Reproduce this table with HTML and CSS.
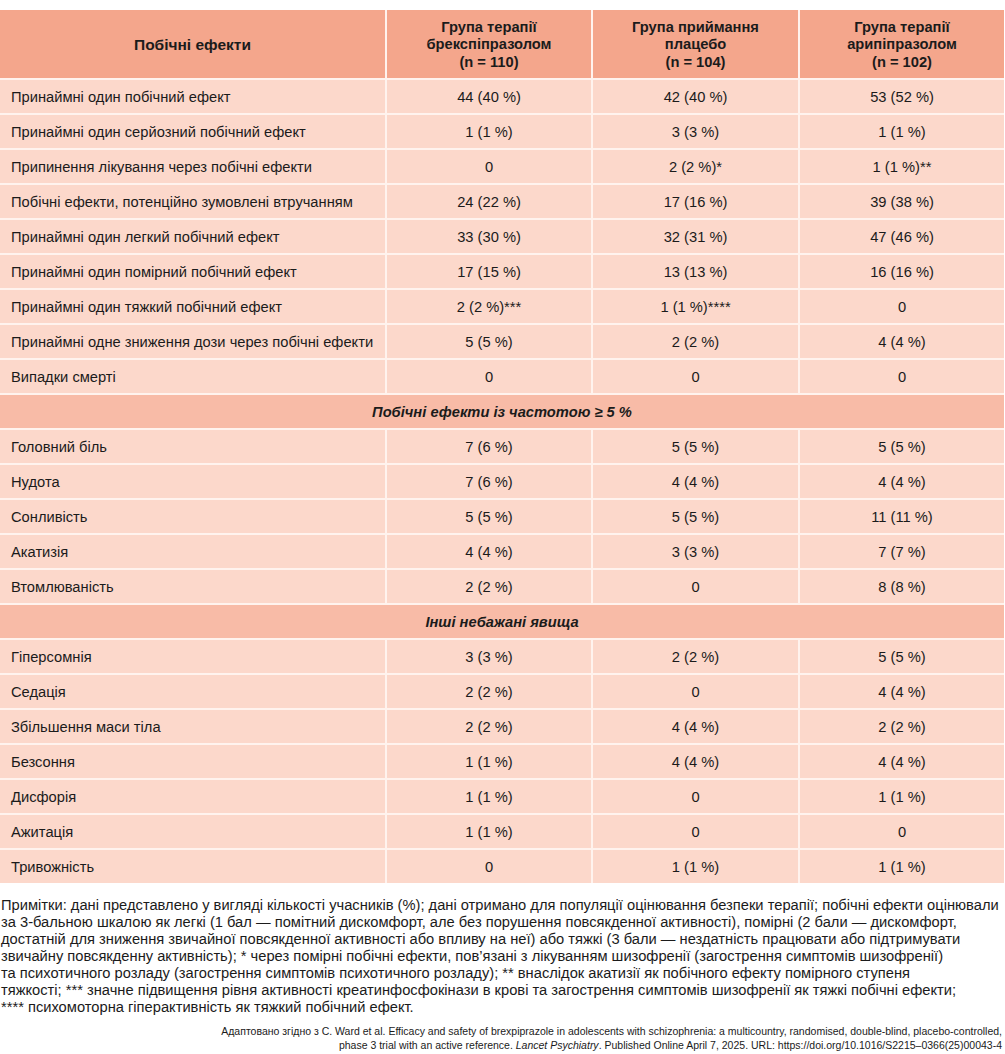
FILE: index.html
```html
<!DOCTYPE html>
<html lang="uk">
<head>
<meta charset="utf-8">
<link rel="stylesheet" href="styles.css">
</head>
<body>
<div class="page">
<table class="ae">
<colgroup><col class="c1"><col class="c2"><col class="c3"><col class="c4"></colgroup>
<thead>
<tr><th class="h1">Побічні ефекти</th><th>Група терапії<br>брекспіпразолом<br>(n = 110)</th><th>Група приймання<br>плацебо<br>(n = 104)</th><th>Група терапії<br>арипіпразолом<br>(n = 102)</th></tr>
</thead>
<tbody>
<tr><td>Принаймні один побічний ефект</td><td>44 (40 %)</td><td>42 (40 %)</td><td>53 (52 %)</td></tr>
<tr><td>Принаймні один серйозний побічний ефект</td><td>1 (1 %)</td><td>3 (3 %)</td><td>1 (1 %)</td></tr>
<tr><td>Припинення лікування через побічні ефекти</td><td>0</td><td>2 (2 %)*</td><td>1 (1 %)**</td></tr>
<tr><td>Побічні ефекти, потенційно зумовлені втручанням</td><td>24 (22 %)</td><td>17 (16 %)</td><td>39 (38 %)</td></tr>
<tr><td>Принаймні один легкий побічний ефект</td><td>33 (30 %)</td><td>32 (31 %)</td><td>47 (46 %)</td></tr>
<tr><td>Принаймні один помірний побічний ефект</td><td>17 (15 %)</td><td>13 (13 %)</td><td>16 (16 %)</td></tr>
<tr><td>Принаймні один тяжкий побічний ефект</td><td>2 (2 %)***</td><td>1 (1 %)****</td><td>0</td></tr>
<tr><td>Принаймні одне зниження дози через побічні ефекти</td><td>5 (5 %)</td><td>2 (2 %)</td><td>4 (4 %)</td></tr>
<tr><td>Випадки смерті</td><td>0</td><td>0</td><td>0</td></tr>
<tr class="sec"><td colspan="4">Побічні ефекти із частотою ≥ 5 %</td></tr>
<tr><td>Головний біль</td><td>7 (6 %)</td><td>5 (5 %)</td><td>5 (5 %)</td></tr>
<tr><td>Нудота</td><td>7 (6 %)</td><td>4 (4 %)</td><td>4 (4 %)</td></tr>
<tr><td>Сонливість</td><td>5 (5 %)</td><td>5 (5 %)</td><td>11 (11 %)</td></tr>
<tr><td>Акатизія</td><td>4 (4 %)</td><td>3 (3 %)</td><td>7 (7 %)</td></tr>
<tr><td>Втомлюваність</td><td>2 (2 %)</td><td>0</td><td>8 (8 %)</td></tr>
<tr class="sec"><td colspan="4">Інші небажані явища</td></tr>
<tr><td>Гіперсомнія</td><td>3 (3 %)</td><td>2 (2 %)</td><td>5 (5 %)</td></tr>
<tr><td>Седація</td><td>2 (2 %)</td><td>0</td><td>4 (4 %)</td></tr>
<tr><td>Збільшення маси тіла</td><td>2 (2 %)</td><td>4 (4 %)</td><td>2 (2 %)</td></tr>
<tr><td>Безсоння</td><td>1 (1 %)</td><td>4 (4 %)</td><td>4 (4 %)</td></tr>
<tr><td>Дисфорія</td><td>1 (1 %)</td><td>0</td><td>1 (1 %)</td></tr>
<tr><td>Ажитація</td><td>1 (1 %)</td><td>0</td><td>0</td></tr>
<tr><td>Тривожність</td><td>0</td><td>1 (1 %)</td><td>1 (1 %)</td></tr>
</tbody>
</table>
<p class="notes">Примітки: дані представлено у вигляді кількості учасників (%); дані отримано для популяції оцінювання безпеки терапії; побічні ефекти оцінювали<br>за 3-бальною шкалою як легкі (1 бал — помітний дискомфорт, але без порушення повсякденної активності), помірні (2 бали — дискомфорт,<br>достатній для зниження звичайної повсякденної активності або впливу на неї) або тяжкі (3 бали — нездатність працювати або підтримувати<br>звичайну повсякденну активність); * через помірні побічні ефекти, пов’язані з лікуванням шизофренії (загострення симптомів шизофренії)<br>та психотичного розладу (загострення симптомів психотичного розладу); ** внаслідок акатизії як побічного ефекту помірного ступеня<br>тяжкості; *** значне підвищення рівня активності креатинфосфокінази в крові та загострення симптомів шизофренії як тяжкі побічні ефекти;<br>**** психомоторна гіперактивність як тяжкий побічний ефект.</p>
<p class="cite">Адаптовано згідно з C. Ward et al. Efficacy and safety of brexpiprazole in adolescents with schizophrenia: a multicountry, randomised, double-blind, placebo-controlled,<br>phase 3 trial with an active reference. <i>Lancet Psychiatry</i>. Published Online April 7, 2025. URL: https://doi.org/10.1016/S2215–0366(25)00043-4</p>
</div>
</body>
</html>
```
FILE: styles.css
```css
html, body {
  margin: 0;
  padding: 0;
  background: #ffffff;
}
.page {
  padding: 10px 1px 0 0;
  font-family: "Liberation Sans", Arial, sans-serif;
  color: #1b1b1b;
}
.ae {
  width: 1004px;
  border-collapse: collapse;
  table-layout: fixed;
  font-size: 14.7px;
}
.c1 { width: 386px; }
.c2 { width: 206px; }
.c3 { width: 207px; }
.c4 { width: 205px; }
.ae th, .ae td {
  border: 2px solid #fff3ee;
  text-align: center;
  padding: 0 6px;
}
.ae th {
  background: #f4a68c;
  font-weight: bold;
  height: 66px;
  line-height: 17.5px;
  padding-top: 2px;
}
.ae th.h1 {
  font-size: 15.5px;
}
.ae td {
  background: #fcd8cb;
  height: 33px;
  line-height: 16px;
}
.ae tbody td:first-child {
  text-align: left;
  padding-left: 11px;
}
.ae tr.sec td {
  background: #f8bba7;
  text-align: center;
  font-weight: bold;
  font-style: italic;
  padding-left: 6px;
}
.ae tr:last-child td {
  border-bottom: none;
}
.ae tr td:first-child, .ae tr th:first-child { border-left: none; }
.ae tr td:last-child, .ae tr th:last-child { border-right: none; }
.ae thead tr th { border-top: none; }
.notes {
  margin: 14px 0 0 1px;
  font-size: 14.7px;
  line-height: 17px;
  white-space: nowrap;
}
.cite {
  margin: 8px 2px 0 0;
  font-size: 10.5px;
  line-height: 14px;
  text-align: right;
  white-space: nowrap;
}
```
